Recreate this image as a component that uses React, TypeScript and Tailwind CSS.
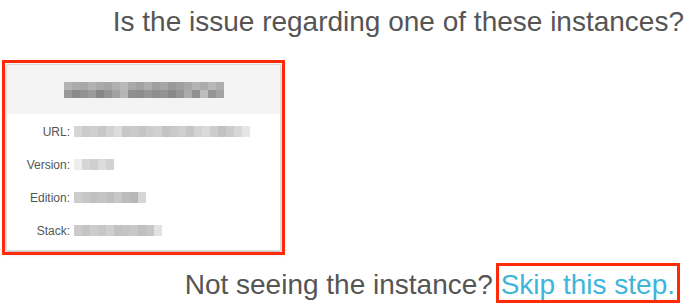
// Instance picker step: question, one (redacted) instance card, skip link.

const FONT = "font-['Liberation_Sans','Helvetica_Neue',Arial,sans-serif]";

// Redacted values are drawn as mosaic strips, like the pixelated screenshot.
function Mosaic({ rows, cell = 8, h = 8 }: { rows: string[][]; cell?: number; h?: number }) {
  return (
    <div className="flex flex-col blur-[0.5px]">
      {rows.map((row, r) => (
        <div key={r} className="flex">
          {row.map((c, i) => (
            <span key={i} style={{ width: cell, height: h, background: c }} />
          ))}
        </div>
      ))}
    </div>
  );
}

const headerRows = [
  ["#b4b4b4", "#acacac", "#a8a8a8", "#b2b2b2", "#aaaaaa", "#a5a5a5", "#b0b0b0", "#b9b9b9", "#a9a9a9", "#a2a2a2", "#adadad", "#a0a0a0", "#a6a6a6", "#999999", "#9f9f9f", "#a8a8a8", "#b3b3b3", "#acacac", "#b8b8b8", "#adadad"],
  ["#999999", "#8a8a8a", "#929292", "#9b9b9b", "#878787", "#949494", "#a2a2a2", "#b6b6b6", "#8f8f8f", "#8c8c8c", "#969696", "#8e8e8e", "#939393", "#898989", "#959595", "#aaaaaa", "#919191", "#bdbdbd", "#969696", "#a3a3a3"],
];

const urlRow = [["#d6d6d6", "#cbcbcb", "#cfcfcf", "#c7c7c7", "#d2d2d2", "#dcdcdc", "#c8c8c8", "#cbcbcb", "#c5c5c5", "#cccccc", "#d1d1d1", "#c3c3c3", "#c9c9c9", "#cfcfcf", "#c6c6c6", "#d3d3d3", "#dadada", "#cdcdcd", "#c2c2c2", "#cbcbcb", "#d7d7d7", "#e6e6e6"]];
const versionRow = [["#eeeeee", "#d6d6d6", "#cfcfcf", "#dcdcdc", "#d2d2d2"]];
const editionRow = [["#cdcdcd", "#c7c7c7", "#c1c1c1", "#c5c5c5", "#bfbfbf", "#c8c8c8", "#bdbdbd", "#b8b8b8", "#d6d6d6"]];
const stackRow = [["#cbcbcb", "#c4c4c4", "#cccccc", "#c7c7c7", "#cfcfcf", "#c2c2c2", "#c5c5c5", "#c8c8c8", "#c0c0c0", "#c6c6c6", "#e2e2e2"]];

function Field({ label, rows }: { label: string; rows: string[][] }) {
  return (
    <div className="flex items-center h-[33px]">
      <span className="w-[67px] text-right text-[12px] text-[#555] pr-[4px]">{label}</span>
      <Mosaic rows={rows} h={11} />
    </div>
  );
}

export default function App() {
  return (
    <div className={`w-[694px] h-[307px] bg-white overflow-hidden ${FONT} text-[#555]`}>
      <h1 className="pt-[8px] pr-[10px] text-right text-[28px] leading-[28px] font-normal">
        Is the issue regarding one of these instances?
      </h1>

      {/* instance card with the red annotation frame */}
      <div className="relative mt-[28px] ml-[6px] w-[275px] h-[187px]">
        <div className="w-full h-full bg-white border border-[#dcdcdc] shadow-[0_2px_5px_rgba(0,0,0,0.3)]">
          <div className="h-[49px] bg-[#f4f4f4] flex items-center justify-center">
            <Mosaic rows={headerRows} />
          </div>
          <div className="pt-[1px]">
            <Field label="URL:" rows={urlRow} />
            <Field label="Version:" rows={versionRow} />
            <Field label="Edition:" rows={editionRow} />
            <Field label="Stack:" rows={stackRow} />
          </div>
        </div>
        <div className="absolute -inset-[4px] border-[3px] border-[#ff2a0a] pointer-events-none" />
      </div>

      <p className="mt-[20px] pr-[19px] text-right text-[28px] leading-[28px]">
        Not seeing the instance?{" "}
        <span className="relative text-[#3eb5da]">
          Skip this step.
          <span className="absolute -left-[5px] -right-[5px] -top-[6px] -bottom-[3px] border-[3px] border-[#ff2a0a]" />
        </span>
      </p>
    </div>
  );
}
